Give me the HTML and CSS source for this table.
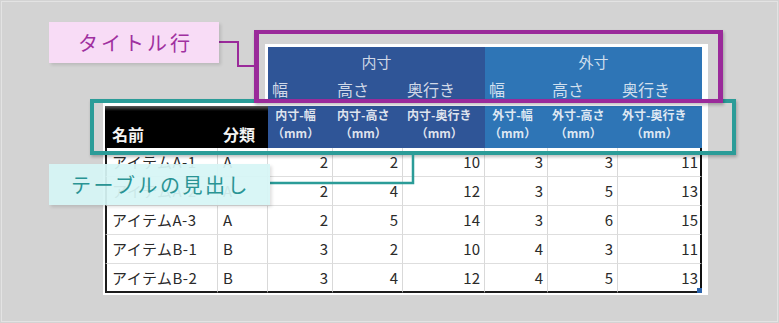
FILE: index.html
```html
<!DOCTYPE html>
<html lang="ja">
<head>
<meta charset="utf-8">
<title>テーブルの見出し</title>
<link rel="stylesheet" href="styles.css">
</head>
<body>
<div class="canvas">
  <div class="sheet">
    <div class="title-block">
      <div class="title-grid">
        <div class="t-group inner">内寸</div>
        <div class="t-group outer">外寸</div>
        <div class="t-sub inner">幅</div>
        <div class="t-sub inner">高さ</div>
        <div class="t-sub inner">奥行き</div>
        <div class="t-sub outer">幅</div>
        <div class="t-sub outer">高さ</div>
        <div class="t-sub outer">奥行き</div>
      </div>
    </div>
    <div class="table-block">
      <div class="table">
        <div class="h-key">名前</div>
        <div class="h-key">分類</div>
        <div class="h-dim inner"><span>内寸-幅<br>（mm）</span></div>
        <div class="h-dim inner"><span>内寸-高さ<br>（mm）</span></div>
        <div class="h-dim inner"><span>内寸-奥行き<br>（mm）</span></div>
        <div class="h-dim outer"><span>外寸-幅<br>（mm）</span></div>
        <div class="h-dim outer"><span>外寸-高さ<br>（mm）</span></div>
        <div class="h-dim outer"><span>外寸-奥行き<br>（mm）</span></div>

        <div class="c name">アイテムA-1</div><div class="c txt">A</div><div class="c num">2</div><div class="c num">2</div><div class="c num">10</div><div class="c num">3</div><div class="c num">3</div><div class="c num last">11</div>
        <div class="c name">アイテムA-2</div><div class="c txt">A</div><div class="c num">2</div><div class="c num">4</div><div class="c num">12</div><div class="c num">3</div><div class="c num">5</div><div class="c num last">13</div>
        <div class="c name">アイテムA-3</div><div class="c txt">A</div><div class="c num">2</div><div class="c num">5</div><div class="c num">14</div><div class="c num">3</div><div class="c num">6</div><div class="c num last">15</div>
        <div class="c name">アイテムB-1</div><div class="c txt">B</div><div class="c num">3</div><div class="c num">2</div><div class="c num">10</div><div class="c num">4</div><div class="c num">3</div><div class="c num last">11</div>
        <div class="c name bottom">アイテムB-2</div><div class="c txt bottom">B</div><div class="c num bottom">3</div><div class="c num bottom">4</div><div class="c num bottom">12</div><div class="c num bottom">4</div><div class="c num bottom">5</div><div class="c num last bottom">13</div>
      </div>
      <span class="fill-handle"></span>
    </div>
  </div>

  <div class="hl hl-head"></div>
  <div class="hl hl-title"></div>

  <svg class="connectors" width="779" height="323" viewBox="0 0 779 323">
    <polyline points="219,42 238,42 238,66 254,66" fill="none" stroke="#9a2a9a" stroke-width="2"/>
    <polyline points="270,183 413,183 413,154" fill="none" stroke="#2b9c98" stroke-width="2.5"/>
  </svg>

  <div class="callout callout-title">タイトル行</div>
  <div class="callout callout-head">テーブルの見出し</div>
</div>
</body>
</html>
```
FILE: styles.css
```css
* { box-sizing: border-box; }

body {
  margin: 0;
  background: #d3d3d3;
  font-family: "Noto Sans CJK JP", "Noto Sans", sans-serif;
}

.canvas {
  position: relative;
  width: 779px;
  height: 323px;
  padding: 44px 0 0 103px;
  overflow: hidden;
}

.canvas::before {
  content: "";
  position: absolute;
  inset: 1px;
  border: 1px solid #e3e3e3;
  pointer-events: none;
}

.sheet {
  width: 605px;
  display: flex;
  flex-direction: column;
}

/* title rows */
.title-block {
  align-self: flex-end;
  width: 443px;
  height: 59px;
  padding: 3px 6px 0 3px;
  background: #fff;
}

.title-grid {
  display: grid;
  grid-template-columns: 65px 70px 82px 63px 70px 84px;
  grid-template-rows: 28px 28px;
  color: rgba(255, 255, 255, 0.78);
}

.inner { background: #2f5597; }
.outer { background: #2e75b6; }

.t-group {
  text-align: center;
  font-size: 15px;
  line-height: 30px;
}
.t-group.inner { grid-column: 1 / 4; }
.t-group.outer { grid-column: 4 / 7; }

.t-sub {
  padding-left: 4px;
  font-size: 16px;
  line-height: 28px;
}

/* table */
.table-block {
  position: relative;
  height: 192px;
  padding: 3px 0 0 2px;
  background: #fff;
}

.table {
  display: grid;
  grid-template-columns: 113px 50px 65px 70px 82px 63px 70px 84px;
  grid-template-rows: 42px repeat(5, 29px);
  width: 597px;
}

.h-key {
  display: flex;
  align-items: flex-end;
  padding: 0 0 4px 7px;
  background: linear-gradient(#5a5a5a, #000 5px);
  color: #f4f4f4;
  font-weight: bold;
  font-size: 16px;
  line-height: 20px;
}
.h-key + .h-key { padding-left: 5px; }

.h-dim {
  padding-left: 4px;
  color: rgba(255, 255, 255, 0.85);
  font-size: 12px;
  font-weight: bold;
  line-height: 18px;
}
.h-dim span {
  display: inline-block;
  text-align: center;
}

.c {
  border-right: 1px solid #d9d9d9;
  border-bottom: 1px solid #dedede;
  color: #2a2a2a;
  font-size: 15px;
  line-height: 28px;
  white-space: nowrap;
}
.c.name {
  padding-left: 5px;
  border-left: 2px solid #1c1c1c;
  letter-spacing: 0.5px;
}
.c.txt { padding-left: 5px; }
.c.num { text-align: right; padding-right: 4px; }
.c.num.last { border-right: 2px solid #111; padding-right: 2px; }
.c.bottom { border-bottom: 2px solid #1c1c1c; }

.fill-handle {
  position: absolute;
  left: 594px;
  top: 185px;
  width: 5px;
  height: 5px;
  background: #2b63ab;
}

/* highlight frames */
.hl {
  position: absolute;
  box-shadow: 1px 2px 3px rgba(0, 0, 0, 0.25);
}
.hl-title {
  left: 254px;
  top: 30px;
  width: 469px;
  height: 73px;
  border: solid #9a2a9a;
  border-width: 4px 5px;
}
.hl-head {
  left: 90px;
  top: 99px;
  width: 646px;
  height: 56px;
  border: 4px solid #2b9c98;
}

.connectors {
  position: absolute;
  left: 0;
  top: 0;
  pointer-events: none;
}

/* callouts */
.callout {
  position: absolute;
  display: flex;
  align-items: center;
  justify-content: center;
  height: 41px;
  font-size: 20px;
  box-shadow: 2px 2px 3px rgba(0, 0, 0, 0.12);
}
.callout-title {
  left: 49px;
  top: 22px;
  width: 170px;
  background: #f8dcf6;
  color: #a0309f;
  letter-spacing: 3px;
  padding-left: 3px;
}
.callout-head {
  left: 49px;
  top: 164px;
  width: 221px;
  background: rgba(214, 245, 245, 0.93);
  color: #2a9494;
  letter-spacing: 2.5px;
  padding-left: 2px;
}
```
